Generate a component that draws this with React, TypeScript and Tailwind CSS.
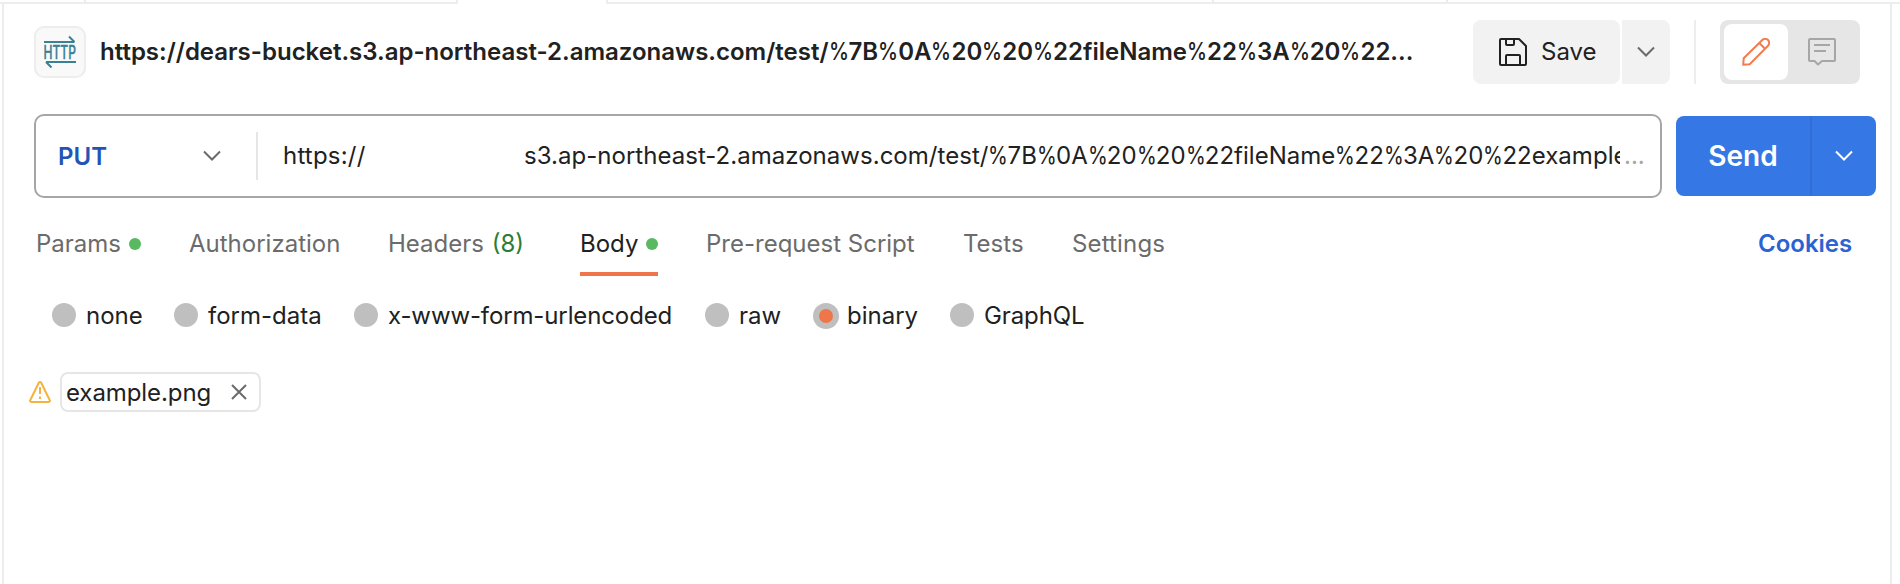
import React from "react";

function Chevron({ className }: { className: string }) {
  return (
    <svg className={className} width="18" height="12" viewBox="0 0 18 12" fill="none" stroke="currentColor" strokeWidth="2">
      <path d="M1 1.5 9 9.5 17 1.5" />
    </svg>
  );
}

function HttpIcon() {
  return (
    <svg width="52" height="52" viewBox="0 0 52 52" fill="none" stroke="#3b8195" strokeWidth="2">
      <path d="M10 16H40.500M35 10.500 40.500 16" />
      <path d="M42 36H12M17.500 41.500 12 36" />
      <text x="9.500" y="33" fontSize="18.500" fontWeight="500" textLength="32.500" lengthAdjust="spacingAndGlyphs" fill="#3b8195" strokeWidth="0.400">
        HTTP
      </text>
    </svg>
  );
}

function SaveIcon() {
  return (
    <svg width="28" height="28" viewBox="0 0 28 28" fill="none" stroke="#212121" strokeWidth="2" strokeLinejoin="round">
      <path d="M2 1H20L27 8V26a1 1 0 0 1-1 1H2a1 1 0 0 1-1-1V2a1 1 0 0 1 1-1Z" />
      <path d="M7 1V6a1 1 0 0 0 1 1H14a1 1 0 0 0 1-1V1" />
      <path d="M7 27V18a1 1 0 0 1 1-1H20a1 1 0 0 1 1 1V27" />
    </svg>
  );
}

function PencilIcon() {
  return (
    <svg width="28" height="28" viewBox="0 0 28 28" fill="none" stroke="#f27c4e" strokeWidth="2" strokeLinejoin="round">
      <path d="M1.200 26.800 1.700 20.300 20.300 2A3.300 3.300 0 0 1 26 7.700L7.700 26.300Z" />
      <path d="M17.300 5 23 10.700" />
    </svg>
  );
}

function CommentIcon() {
  return (
    <svg width="28" height="28" viewBox="0 0 28 28" fill="none" stroke="#a6a6a6" strokeWidth="2" strokeLinejoin="round">
      <path d="M2 1H26a1 1 0 0 1 1 1V22a1 1 0 0 1-1 1H14L10 26.500 6.500 23H2a1 1 0 0 1-1-1V2a1 1 0 0 1 1-1Z" />
      <path d="M6 7H22M6 13H18" />
    </svg>
  );
}

function WarningIcon() {
  return (
    <svg width="22" height="22" viewBox="0 0 22 22" fill="none" stroke="#f5b23e" strokeWidth="2" strokeLinejoin="round">
      <path d="M9.800 1.800 1.200 19.200A1.200 1.200 0 0 0 2.200 21H19.800A1.200 1.200 0 0 0 20.800 19.200L12.200 1.800A1.400 1.400 0 0 0 9.800 1.800Z" />
      <path d="M11 6V13M11 15.500V18" />
    </svg>
  );
}

/** Text whose percent signs are set in a condensed, slightly lighter form. */
function Encoded({ text, percent }: { text: string; percent: string }) {
  return (
    <>
      {text.split("%").map((part, i) => (
        <React.Fragment key={i}>
          {i > 0 && <span className={"inline-block origin-left " + percent}>%</span>}
          {part}
        </React.Fragment>
      ))}
    </>
  );
}

function Dot() {
  return <span className="ml-2 size-3 rounded-full bg-[#58b960]" />;
}

function Radio({ label, width, text = "ml-2.5", active }: { label: string; width: string; text?: string; active?: boolean }) {
  return (
    <label className={"flex shrink-0 " + width}>
      <span className="-mt-px flex h-[26px] shrink-0 items-start">
        {active ? (
          <span className="flex size-[26px] items-center justify-center rounded-full bg-[#bfbfbf]">
            <span className="size-3.5 rounded-full bg-[#ee764a]" />
          </span>
        ) : (
          <span className="size-6 rounded-full bg-[#bfbfbf]" />
        )}
      </span>
      <span className={"h-6 whitespace-nowrap leading-6 " + text}>{label}</span>
    </label>
  );
}

export default function App() {
  return (
    <div className="flex h-[584px] w-[1900px] flex-col overflow-hidden bg-white font-['Inter',sans-serif] text-2xl text-[#212121]">
      <div className="flex h-1 shrink-0">
        <div className="w-[86px] border-r-2 border-b-2 border-[#ededed]" />
        <div className="w-[372px] border-r-2 border-b-2 border-[#ededed]" />
        <div className="w-[148px]" />
        <div className="w-[608px] border-x-2 border-b-2 border-[#ededed]" />
        <div className="w-[234px] border-r-2 border-b-2 border-[#ededed]" />
        <div className="flex-1 border-b-2 border-[#ededed]" />
      </div>
      <div className="ml-0.5 flex w-[1890px] flex-1 flex-col border-x-2 border-[#ededed]">
        <header className="mt-4 ml-[30px] flex h-16 shrink-0">
          <div className="mt-1.5 flex size-[52px] shrink-0 items-center justify-center rounded-[10px] border-2 border-[#ededed] bg-[#f9f9f9]">
            <div className="-m-0.5"><HttpIcon /></div>
          </div>
          <h1 className="ml-3.5 w-[1373px] whitespace-nowrap font-semibold leading-[63px]">
            <Encoded
              text="https://dears-bucket.s3.ap-northeast-2.amazonaws.com/test/%7B%0A%20%20%22fileName%22%3A%20%22..."
              percent="w-[20px] scale-x-[0.84] font-medium"
            />
          </h1>
          <button className="flex w-[147px] items-center rounded-lg bg-[#f2f2f2] pl-[26px]">
            <SaveIcon />
            <span className="ml-3.5 pb-0.5 leading-[61px]">Save</span>
          </button>
          <button className="ml-0.5 flex w-12 items-center justify-center rounded-lg rounded-l-none bg-[#f2f2f2] text-[#6b6b6b]">
            <Chevron className="" />
          </button>
          <div className="ml-6 w-0.5 bg-[#ededed]" />
          <div className="ml-6 flex w-[140px] rounded-lg bg-[#e6e6e6] p-1">
            <div className="flex w-16 items-center justify-center rounded-lg bg-white"><PencilIcon /></div>
            <div className="flex flex-1 items-center justify-center"><CommentIcon /></div>
          </div>
        </header>

        <div className="mt-[30px] ml-[30px] flex h-[84px] shrink-0">
          <div className="flex w-[1628px] items-center rounded-[10px] border-2 border-[#a6a6a6] leading-10">
            <span className="ml-[22px] w-[145px] pt-px font-semibold text-[#2354b5]">PUT</span>
            <Chevron className="text-[#6b6b6b]" />
            <div className="ml-[35px] h-12 w-0.5 bg-[#e6e6e6]" />
            <div className="ml-[25px] flex w-[1337px] overflow-hidden whitespace-nowrap">
              <span className="w-[241px] shrink-0 tracking-[0.2px]">https://</span>
              <span className="tracking-[0.03px]">
                <Encoded
                  text="s3.ap-northeast-2.amazonaws.com/test/%7B%0A%20%20%22fileName%22%3A%20%22example"
                  percent="w-[19.1px] scale-x-[0.84]"
                />
              </span>
            </div>
            <span className="ml-1 text-[#a6a6a6]">...</span>
          </div>
          <div className="mt-0.5 ml-3.5 flex h-20 w-[200px] rounded-lg bg-[#3578e5] text-white">
            <button className="w-[136px] border-r-2 border-[#316fd6] pt-0.5 text-[28px] font-semibold">Send</button>
            <button className="flex flex-1 items-center justify-center"><Chevron className="" /></button>
          </div>
        </div>

        <nav className="mt-5 flex h-[58px] shrink-0 pl-8 text-[#6b6b6b] leading-[52px]">
          <span className="flex w-[153px] items-center pb-1.5">Params<Dot /></span>
          <span className="w-[199px]">Authorization</span>
          <span className="w-[192px]">Headers <span className="ml-px text-[#2f7d34]">(8)</span></span>
          <span className="mr-12 flex w-[78px] items-center border-b-4 border-[#ee764a] pb-0.5 text-[#212121]">Body<Dot /></span>
          <span className="w-[257px]">Pre-request Script</span>
          <span className="w-[109px]">Tests</span>
          <span className="w-[686px] tracking-[0.15px]">Settings</span>
          <span className="font-semibold text-[#2b63d1]">Cookies</span>
        </nav>

        <div className="mt-7 flex h-6 shrink-0 pl-12">
          <Radio label="none" width="w-[122px]" />
          <Radio label="form-data" width="w-[180px]" />
          <Radio label="x-www-form-urlencoded" width="w-[351px]" text="ml-2.5 tracking-[-0.12px]" />
          <Radio label="raw" width="w-[108px]" />
          <Radio label="binary" width="w-[137px]" text="ml-2" active />
          <Radio label="GraphQL" width="w-[140px]" text="ml-2.5 tracking-[-0.1px]" />
        </div>

        <div className="mt-[44px] ml-[25px] flex h-10 items-center">
          <WarningIcon />
          <div className="ml-[9px] flex h-10 w-[201px] items-center justify-between rounded-lg border-2 border-[#e6e6e6] pr-3 pl-1">
            <span className="pt-0.5 leading-[34px] tracking-[-0.08px]">example.png</span>
            <svg width="16" height="16" viewBox="0 0 16 16" stroke="#6b6b6b" strokeWidth="2"><path d="M1 1 15 15M15 1 1 15" /></svg>
          </div>
        </div>
      </div>
    </div>
  );
}
